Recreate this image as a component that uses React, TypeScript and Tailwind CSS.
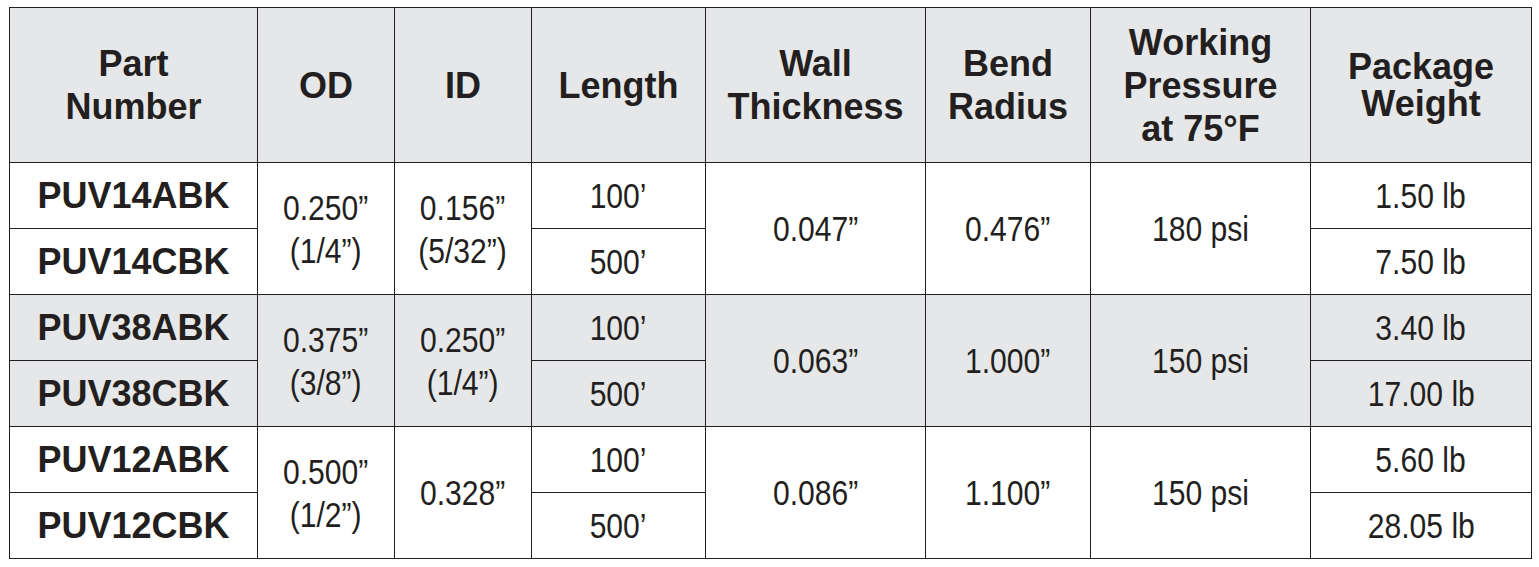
const head = "bg-[#e6e7e8] flex items-center justify-center text-center font-bold text-[36px] leading-[43px]";
const bold = "flex items-center justify-center font-bold text-[36px] leading-[43px]";
const reg = "flex items-center justify-center text-center text-[35px] leading-[43px]";

type Group = {
  parts: [string, string];
  od: string[];
  id: string[];
  wall: string;
  bend: string;
  pressure: string;
  weights: [string, string];
  shaded?: boolean;
};

const groups: Group[] = [
  {
    parts: ["PUV14ABK", "PUV14CBK"],
    od: ["0.250\u201d", "(1/4\u201d)"],
    id: ["0.156\u201d", "(5/32\u201d)"],
    wall: "0.047\u201d",
    bend: "0.476\u201d",
    pressure: "180 psi",
    weights: ["1.50 lb", "7.50 lb"],
  },
  {
    parts: ["PUV38ABK", "PUV38CBK"],
    od: ["0.375\u201d", "(3/8\u201d)"],
    id: ["0.250\u201d", "(1/4\u201d)"],
    wall: "0.063\u201d",
    bend: "1.000\u201d",
    pressure: "150 psi",
    weights: ["3.40 lb", "17.00 lb"],
    shaded: true,
  },
  {
    parts: ["PUV12ABK", "PUV12CBK"],
    od: ["0.500\u201d", "(1/2\u201d)"],
    id: ["0.328\u201d"],
    wall: "0.086\u201d",
    bend: "1.100\u201d",
    pressure: "150 psi",
    weights: ["5.60 lb", "28.05 lb"],
  },
];

const Lines = ({ lines }: { lines: string[] }) => (
  <div>
    {lines.map((l) => (
      <div key={l}>{l}</div>
    ))}
  </div>
);

// body values are set in a narrow face in the original, squeeze them a bit
const Narrow = ({ lines }: { lines: string[] }) => (
  <div className="inline-block scale-x-[0.86] whitespace-nowrap">
    {lines.map((l) => (
      <div key={l}>{l}</div>
    ))}
  </div>
);

export default function App() {
  return (
    <div className="bg-white w-[1539px] h-[567px] pt-[7px] pl-[9px] font-['Liberation_Sans',Arial,sans-serif] text-[#231f20]">
      <div className="inline-grid grid-cols-[247px_136px_136px_173px_219px_164px_219px_220px] grid-rows-[154px_repeat(6,65px)] gap-px p-px bg-[#231f20]">
        <div className={head}>
          <Lines lines={["Part", "Number"]} />
        </div>
        <div className={head}>OD</div>
        <div className={head}>ID</div>
        <div className={head}>Length</div>
        <div className={head}>
          <Lines lines={["Wall", "Thickness"]} />
        </div>
        <div className={head}>
          <Lines lines={["Bend", "Radius"]} />
        </div>
        <div className={head}>
          <Lines lines={["Working", "Pressure", "at 75\u00b0F"]} />
        </div>
        <div className={head + " !leading-[37px]"}>
          <Lines lines={["Package", "Weight"]} />
        </div>

        {groups.map((g) => {
          const bg = g.shaded ? " bg-[#e6e7e8]" : " bg-white";
          return [
            <div key={g.parts[0]} className={bold + bg}>{g.parts[0]}</div>,
            <div key={g.parts[0] + "od"} className={reg + bg + " row-span-2"}>
              <Narrow lines={g.od} />
            </div>,
            <div key={g.parts[0] + "id"} className={reg + bg + " row-span-2"}>
              <Narrow lines={g.id} />
            </div>,
            <div key={g.parts[0] + "l1"} className={reg + bg}>
              <Narrow lines={["100\u2019"]} />
            </div>,
            <div key={g.parts[0] + "w"} className={reg + bg + " row-span-2"}>
              <Narrow lines={[g.wall]} />
            </div>,
            <div key={g.parts[0] + "b"} className={reg + bg + " row-span-2"}>
              <Narrow lines={[g.bend]} />
            </div>,
            <div key={g.parts[0] + "p"} className={reg + bg + " row-span-2"}>
              <Narrow lines={[g.pressure]} />
            </div>,
            <div key={g.parts[0] + "wt1"} className={reg + bg}>
              <Narrow lines={[g.weights[0]]} />
            </div>,
            <div key={g.parts[1]} className={bold + bg}>{g.parts[1]}</div>,
            <div key={g.parts[0] + "l2"} className={reg + bg}>
              <Narrow lines={["500\u2019"]} />
            </div>,
            <div key={g.parts[0] + "wt2"} className={reg + bg}>
              <Narrow lines={[g.weights[1]]} />
            </div>,
          ];
        })}
      </div>
    </div>
  );
}
